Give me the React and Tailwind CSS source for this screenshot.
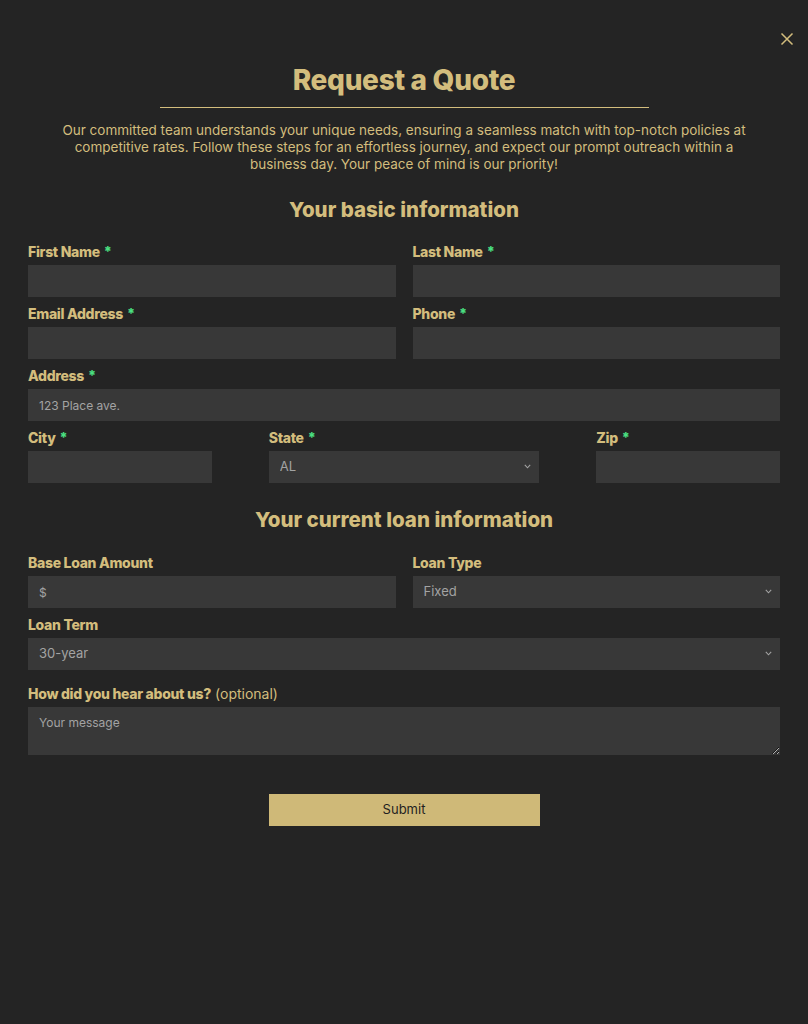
import { useState } from "react";

const gold = "text-[#d3bd7d]";
const inputCls =
  "w-full h-[32px] bg-[#383838] px-[11px] text-[13px] text-[#a3a3a3] placeholder:text-[#a3a3a3] placeholder:text-[12px] outline-none";

function Label({ children, required, optional }) {
  return (
    <label className={`block text-[14px] leading-[16px] font-extrabold tracking-[-0.3px] mb-[5px] ${gold}`}>
      {children}
      {required && <span className="text-[#4ade80] ml-[4px]">*</span>}
      {optional && <span className="font-normal tracking-normal ml-[4px]">(optional)</span>}
    </label>
  );
}

function Field({ label, required, children }) {
  return (
    <div>
      <Label required={required}>{label}</Label>
      {children}
    </div>
  );
}

function Select({ value, options }) {
  return (
    <div className="relative">
      <select defaultValue={value} className={`${inputCls} appearance-none`}>
        {options.map((o) => (
          <option key={o}>{o}</option>
        ))}
      </select>
      <svg
        className="absolute right-[8px] top-[13px] pointer-events-none"
        width="7"
        height="5"
        viewBox="0 0 7 5"
        fill="none"
      >
        <path d="M0.8 0.8 L3.5 3.8 L6.2 0.8" stroke="#a3a3a3" strokeWidth="1.1" />
      </svg>
    </div>
  );
}

export default function App() {
  const [form, setForm] = useState({});
  const set = (k) => (e) => setForm({ ...form, [k]: e.target.value });

  return (
    <div
      className="min-h-[1024px] bg-[#242424] relative"
      style={{ fontFamily: "Inter, 'Noto Sans', sans-serif" }}
    >
      <button className={`absolute right-[14px] top-[32px] ${gold}`}>
        <svg width="14" height="14" viewBox="0 0 14 14" fill="none">
          <path d="M1.5 1.5 L12.5 12.5 M12.5 1.5 L1.5 12.5" stroke="currentColor" strokeWidth="1.5" />
        </svg>
      </button>

      <div className="px-[28px] pt-[63px]">
        <h1 className={`text-center text-[28px] leading-[34px] font-extrabold tracking-[-0.3px] ${gold}`}>
          Request a Quote
        </h1>
        <div className="mx-auto w-[489px] border-t border-[#d3bd7d] mt-[10px]" />
        <p className={`mx-auto max-w-[692px] text-center text-[13.5px] leading-[17px] mt-[14px] ${gold}`}>
          Our committed team understands your unique needs, ensuring a seamless match with top-notch
          policies at competitive rates. Follow these steps for an effortless journey, and expect our
          prompt outreach within a business day. Your peace of mind is our priority!
        </p>

        <h2 className={`text-center text-[20.5px] leading-[28px] font-extrabold mt-[23px] ${gold}`}>
          Your basic information
        </h2>

        <div className="mt-[20px] flex flex-col gap-[9px]">
          <div className="grid grid-cols-2 gap-x-[17px]">
            <Field label="First Name" required>
              <input className={inputCls} value={form.first || ""} onChange={set("first")} />
            </Field>
            <Field label="Last Name" required>
              <input className={inputCls} value={form.last || ""} onChange={set("last")} />
            </Field>
          </div>
          <div className="grid grid-cols-2 gap-x-[17px]">
            <Field label="Email Address" required>
              <input className={inputCls} value={form.email || ""} onChange={set("email")} />
            </Field>
            <Field label="Phone" required>
              <input className={inputCls} value={form.phone || ""} onChange={set("phone")} />
            </Field>
          </div>
          <Field label="Address" required>
            <input className={inputCls} placeholder="123 Place ave." />
          </Field>
          <div className="grid grid-cols-[184fr_271fr_184fr] gap-x-[57px]">
            <Field label="City" required>
              <input className={inputCls} />
            </Field>
            <Field label="State" required>
              <Select value="AL" options={["AL", "AK", "AZ", "AR", "CA"]} />
            </Field>
            <Field label="Zip" required>
              <input className={inputCls} />
            </Field>
          </div>
        </div>

        <h2 className={`text-center text-[20.5px] leading-[28px] font-extrabold mt-[23px] ${gold}`}>
          Your current loan information
        </h2>

        <div className="mt-[21px] flex flex-col gap-[9px]">
          <div className="grid grid-cols-2 gap-x-[17px]">
            <Field label="Base Loan Amount">
              <input className={inputCls} placeholder="$" />
            </Field>
            <Field label="Loan Type">
              <Select value="Fixed" options={["Fixed", "Adjustable"]} />
            </Field>
          </div>
          <Field label="Loan Term">
            <Select value="30-year" options={["30-year", "20-year", "15-year", "10-year"]} />
          </Field>
          <div className="mt-[7px]">
            <Label optional>How did you hear about us?</Label>
            <textarea
              className="block w-full h-[48px] bg-[#383838] px-[11px] py-[8px] text-[12px] leading-[16px] text-[#a3a3a3] placeholder:text-[#a3a3a3] outline-none"
              placeholder="Your message"
            />
          </div>
        </div>

        <div className="flex justify-center mt-[39px]">
          <button className="w-[271px] h-[32px] bg-[#cfb978] text-[13px] text-[#1f1f1f]">Submit</button>
        </div>
      </div>
    </div>
  );
}
